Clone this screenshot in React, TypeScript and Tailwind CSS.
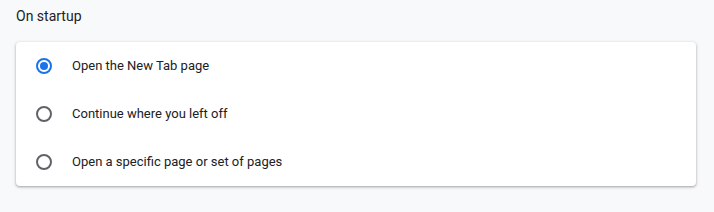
import { useState } from 'react';

const options = [
  'Open the New Tab page',
  'Continue where you left off',
  'Open a specific page or set of pages',
];

function Radio({ checked }: { checked: boolean }) {
  return (
    <span
      className={`flex h-4 w-4 items-center justify-center rounded-full border-2 ${
        checked ? 'border-[#1a73e8]' : 'border-[#5f6368]'
      }`}
    >
      {checked && <span className="h-2 w-2 rounded-full bg-[#1a73e8]" />}
    </span>
  );
}

export default function App() {
  const [selected, setSelected] = useState(0);

  return (
    <div
      className="h-[212px] w-[714px] bg-[#f8f9fa] pt-[7px] text-[#202124]"
      style={{ fontFamily: 'Roboto, "Liberation Sans", sans-serif' }}
    >
      {/* Section title */}
      <h2 className="px-4 text-[14px] leading-[18px] font-normal">On startup</h2>

      {/* Card */}
      <div className="mt-[17px] ml-4 w-[680px] rounded bg-white shadow-[0_1px_2px_0_rgba(60,64,67,0.3),0_1px_3px_1px_rgba(60,64,67,0.15)]">
        {options.map((label, i) => (
          <label
            key={label}
            className="flex h-12 cursor-pointer items-center pl-5"
            onClick={() => setSelected(i)}
          >
            <Radio checked={selected === i} />
            <span className="ml-5 text-[13px]">{label}</span>
          </label>
        ))}
      </div>
    </div>
  );
}
